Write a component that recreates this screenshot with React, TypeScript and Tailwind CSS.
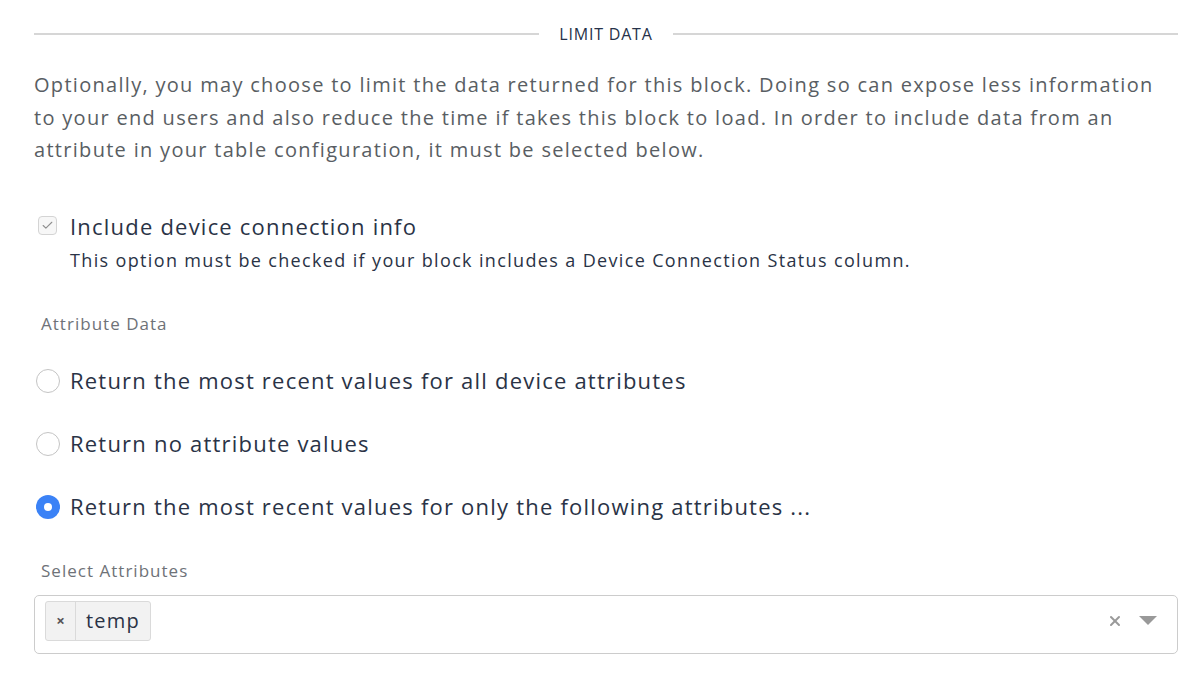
import { Check, X } from "lucide-react";

function Radio({ checked, label }: { checked?: boolean; label: string }) {
  return (
    <label className="flex items-center gap-[10px]">
      {checked ? (
        <span className="flex h-[24px] w-[24px] items-center justify-center rounded-full bg-[#3b82f6]">
          <span className="h-[8px] w-[8px] rounded-full bg-white" />
        </span>
      ) : (
        <span className="h-[24px] w-[24px] rounded-full border border-[#c4c4c4] bg-white" />
      )}
      <span className="text-[22px] tracking-[0.055em] text-[#2a3346]">{label}</span>
    </label>
  );
}

export default function App() {
  return (
    <div className="min-h-screen bg-white pl-[34px] pr-[22px] pt-[22px] font-['Open_Sans',sans-serif]">
      {/* header */}
      <div className="flex items-center gap-[20px]">
        <div className="h-[2px] flex-1 bg-[#d6d6d6]" />
        <span className="text-[16px] tracking-[0.05em] text-[#26324a]">LIMIT DATA</span>
        <div className="h-[2px] flex-1 bg-[#d6d6d6]" />
      </div>

      <p className="mt-[23px] max-w-[1130px] text-[20px] leading-[32.5px] tracking-[0.065em] text-[#595e63]">
        Optionally, you may choose to limit the data returned for this block. Doing so can expose less information
        to your end users and also reduce the time if takes this block to load. In order to include data from an
        attribute in your table configuration, it must be selected below.
      </p>

      {/* checkbox */}
      <div className="mt-[43px] flex items-start gap-[13px] pl-[4px]">
        <span className="mt-[6px] flex h-[19px] w-[19px] items-center justify-center rounded-[4px] border border-[#d4d4d4] bg-[#f7f7f7]">
          <Check size={13} strokeWidth={2} className="text-[#8f8f8f]" />
        </span>
        <div>
          <div className="text-[22px] leading-[32px] tracking-[0.055em] text-[#2a3346]">Include device connection info</div>
          <div className="mt-[4px] text-[18px] leading-[28px] tracking-[0.075em] text-[#2a3346]">
            This option must be checked if your block includes a Device Connection Status column.
          </div>
        </div>
      </div>

      <div className="mt-[37px] pl-[7px] text-[17px] tracking-[0.06em] text-[#6e7278]">Attribute Data</div>

      <div className="mt-[28px] flex flex-col gap-[30px] pl-[2px]">
        <Radio label="Return the most recent values for all device attributes" />
        <Radio label="Return no attribute values" />
        <Radio checked label="Return the most recent values for only the following attributes ..." />
      </div>

      <div className="mt-[35px] pl-[7px] text-[17px] tracking-[0.06em] text-[#6e7278]">Select Attributes</div>

      <div className="mt-[11px] flex h-[59px] items-start rounded-[5px] border border-[#cccccc] pl-[10px] pr-[20px] pt-[5px]">
        <div className="flex h-[40px] items-stretch rounded-[3px] border border-[#dadada] bg-[#f2f2f2]">
          <span className="flex w-[30px] items-center justify-center border-r border-[#dadada] text-[15px] font-bold text-[#555]">
            ×
          </span>
          <span className="flex items-center px-[10px] text-[20px] tracking-[0.06em] text-[#2a3346]">temp</span>
        </div>
        <div className="flex-1" />
        <div className="flex h-[40px] items-center">
          <X size={16} strokeWidth={3} className="text-[#999]" />
          <svg width="18" height="10" viewBox="0 0 18 10" className="ml-[16px]">
            <path d="M0 0 L18 0 L9 9 Z" fill="#999" />
          </svg>
        </div>
      </div>
    </div>
  );
}
